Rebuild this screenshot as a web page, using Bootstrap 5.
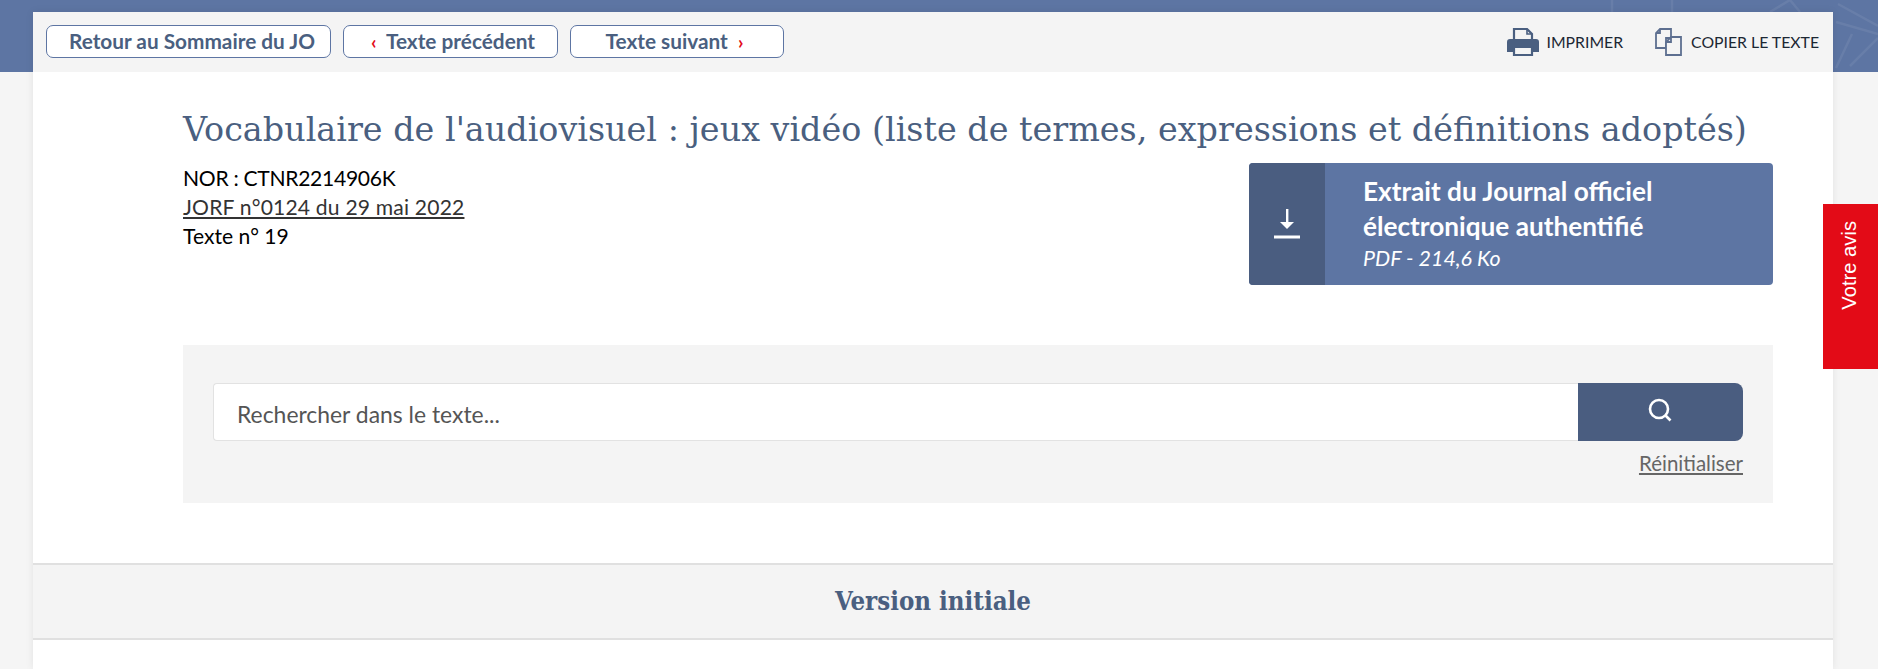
<!DOCTYPE html>
<html lang="fr"><head><meta charset="utf-8"><title>JO</title>
<link href="https://cdn.jsdelivr.net/npm/bootstrap@5.3.0/dist/css/bootstrap.min.css" rel="stylesheet">
<style>
body{background:#f5f5f5;font-family:"Lato","Noto Sans",sans-serif;overflow:hidden;height:669px;position:relative}
.banner{height:72px;background:#5d75a3;position:absolute;top:0;left:0;right:0}
.sheet{position:relative;margin:0 45px 0 33px;top:12px;background:#fff;box-shadow:0 0 8px rgba(0,0,0,.08);height:657px}
.toolbar{height:60px;background:#f4f4f4;padding:13px 14px 0 13px}
.navbtn{height:33px;border:1px solid #5d75a3;border-radius:7px;background:#fff;color:#4a5f80;font:700 20.8px/29px "Lato",sans-serif;padding:0;text-align:center}
.w1{width:285px;padding-left:7px}.w2{width:215px;padding-left:5px}.w3{width:214px;padding-right:5px}
.chev{color:#e30b17;font-weight:700;font-size:19px}
.tool{font:400 15.8px "Lato",sans-serif;color:#1c2733}
.doc{padding:0 60px 0 150px}
h1.ttl{font:400 33.4px/1.2 "DejaVu Serif",serif;color:#4a5f80;margin:0;padding-top:38px;height:91px;white-space:nowrap}
.meta{font:400 21.1px/29px "Lato",sans-serif;color:#000}
.meta a{color:#333;letter-spacing:.18px}
.norline{letter-spacing:-.3px}
.dl{width:524px;height:122px;background:#5d75a3;border-radius:4px;overflow:hidden;color:#fff}
.dlicon{width:76px;background:#4a5d80}
.dltext{padding:11px 0 0 38px;font:700 26.2px/35px "Lato",sans-serif}
.dltext em{font:italic 400 21.4px/29px "Lato",sans-serif;display:block}
.searchbox{background:#f4f4f4;height:158px;margin-top:-4px;padding:38px 30px 0}
.field{height:58px;border:1px solid #e2e2e2;border-right:0;border-radius:4px 0 0 4px;background:#fff;font:400 22.9px "Lato",sans-serif;color:#555;padding:4px 23px 0;box-shadow:none}
.field::placeholder{color:#555;opacity:1}
.sbtn{width:165px;height:58px;background:#4a5d80;border:0;border-radius:0 8px 8px 0;padding:0 2px 4px 0}
.reset{font:400 20.5px/28px "Lato",sans-serif;color:#666}
.vers{position:absolute;left:0;right:0;top:551px;height:77px;background:#f4f4f4;border-top:2px solid #e0e0e0;border-bottom:2px solid #e0e0e0;color:#4a5f80;font:700 25.6px/73px "DejaVu Serif",serif;font-stretch:condensed;text-align:center}
.avis{position:fixed;right:0;top:204px;width:55px;height:165px;background:#e30b17;color:#fff;font:400 20.2px "Liberation Sans",Arial,sans-serif;display:flex;align-items:flex-start;justify-content:center;padding:17px 2px 0 0;z-index:5}
.avis span{writing-mode:vertical-rl;transform:rotate(180deg)}
</style></head><body>
<div class="banner"><svg width="1878" height="72" fill="none" stroke="#fff" stroke-opacity=".07" stroke-width="2.5"><path d="M1612 0V12M1672 0V12M1770 12l20-12M1800 12l-10-12M1838 4l40 22M1836 22l42 12M1878 38l-28 28M1852 34l-16 34"/></svg></div>
<div class="sheet">
<div class="toolbar d-flex justify-content-between">
 <div class="d-flex navgroup" style="column-gap:12px">
  <a class="navbtn w1 text-decoration-none" href="#">Retour au Sommaire du JO</a>
  <a class="navbtn w2 text-decoration-none" href="#"><span class="chev">‹</span>&nbsp; Texte précédent</a>
  <a class="navbtn w3 text-decoration-none" href="#">Texte suivant &nbsp;<span class="chev">›</span></a>
 </div>
 <div class="d-flex align-items-start tool" style="padding-top:3px">
  <svg width="32" height="28" viewBox="0 0 32 28"><path d="M7 11V1h13l5 5v6" fill="none" stroke="#4a5f80" stroke-width="2.2"/><path d="M20 1v5h5" fill="none" stroke="#4a5f80" stroke-width="1.6"/><path d="M3 11h26a3 3 0 0 1 3 3v10h-6v-5H6v5H0V14a3 3 0 0 1 3-3z" fill="#4a5f80"/><path d="M7 19h18v8H7z" fill="none" stroke="#4a5f80" stroke-width="2.2"/></svg>
  <span class="ms-2" style="line-height:28px">IMPRIMER</span>
  <svg style="margin-left:32px" width="28" height="28" viewBox="0 0 28 28" fill="none" stroke="#5d6f90" stroke-width="1.8"><path d="M5 1h11v9h-5v10H1V5zM5 1v4H1"/><path d="M16 9h10v18H11V14zM16 9v5h-5" fill="#f4f4f4"/></svg>
  <span class="ms-2" style="line-height:28px">COPIER LE TEXTE</span>
 </div>
</div>
<div class="doc">
 <h1 class="ttl">Vocabulaire de l'audiovisuel : jeux vidéo (liste de termes, expressions et définitions adoptés)</h1>
 <div class="d-flex justify-content-between" style="height:186px">
  <div class="meta"><span class="norline">NOR : CTNR2214906K</span><br><a href="#">JORF n°0124 du 29 mai 2022</a><br>Texte n° 19</div>
  <div class="dl d-flex">
   <div class="dlicon d-flex align-items-center justify-content-center">
    <svg width="26" height="30" viewBox="0 0 26 30" fill="#fff"><path d="M12 0h2.4v15H12z"/><path d="M6 13h14l-7 7z"/><path d="M0 26.500h26V29.500H0z"/></svg>
   </div>
   <div class="dltext">Extrait du Journal officiel<br>électronique authentifié<em>PDF - 214,6 Ko</em></div>
  </div>
 </div>
 <div class="searchbox">
  <div class="d-flex"><input class="form-control field flex-grow-1" placeholder="Rechercher dans le texte..."><button class="sbtn flex-shrink-0 d-flex align-items-center justify-content-center"><svg width="26" height="26" viewBox="0 0 26 26" fill="none" stroke="#fff" stroke-width="2.6"><circle cx="12" cy="12" r="9"/><path d="M18.500 18.500l5 5"/></svg></button></div>
  <div class="text-end reset mt-2"><a href="#" style="color:#666">Réinitialiser</a></div>
 </div>
</div>
<div class="vers">Version initiale</div>
</div>
<a class="avis text-decoration-none" href="#"><span>Votre avis</span></a>
<script src="https://cdn.jsdelivr.net/npm/bootstrap@5.3.0/dist/js/bootstrap.bundle.min.js"></script>
</body></html>
